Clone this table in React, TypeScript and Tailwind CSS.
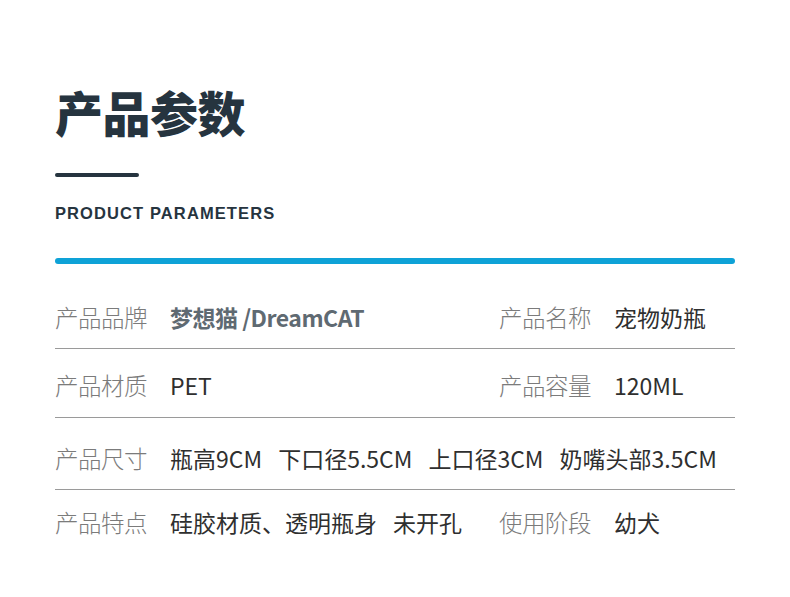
const CJK = { fontFamily: '"Noto Sans CJK SC", "Noto Sans", sans-serif' };

type Cell = { label: string; value: string[]; bold?: boolean };

function Field({ label, value, bold }: Cell) {
  return (
    <div className="flex items-center whitespace-nowrap">
      <span className="w-[115px] shrink-0 text-[23.5px] leading-[22px] font-light text-[#7b7b7b] tracking-[-0.5px]">{label}</span>
      <span
        className={
          bold
            ? "flex gap-4 text-[23px] leading-[22px] font-bold text-[#5f6a72] tracking-[-0.5px]"
            : "flex gap-4 text-[23px] leading-[22px] text-[#2f2f2f] tracking-[0px]"
        }
      >
        {value.map((v) => (
          <span key={v}>{v}</span>
        ))}
      </span>
    </div>
  );
}

export default function App() {
  return (
    <div className="w-[790px] h-[597px] bg-white overflow-hidden" style={CJK}>
      <div className="pl-[55px] pr-[55px] pt-[86px]">
        <h1 className="text-[48px] leading-[50px] font-black text-[#26343f] tracking-[-0.5px]">产品参数</h1>
        <div className="mt-[37px] h-[4px] w-[84px] rounded-full bg-[#26343f]" />
        <div
          className="mt-[27px] text-[16.5px] leading-[18px] font-bold text-[#26343f] tracking-[1.1px]"
          style={{ fontFamily: '"Liberation Sans", Arial, sans-serif' }}
        >
          PRODUCT PARAMETERS
        </div>
        <div className="mt-[36px] h-[6px] w-full rounded-full bg-[#0ea2d7]" />

        <div className="pt-[42px] pb-[20px] border-b border-[#9a9a9a] flex">
          <div className="w-[444px]">
            <Field label="产品品牌" value={["梦想猫 /DreamCAT"]} bold />
          </div>
          <Field label="产品名称" value={["宠物奶瓶"]} />
        </div>
        <div className="pt-[25px] pb-[21px] border-b border-[#9a9a9a] flex">
          <div className="w-[444px]">
            <Field label="产品材质" value={["PET"]} />
          </div>
          <Field label="产品容量" value={["120ML"]} />
        </div>
        <div className="pt-[29px] pb-[20px] border-b border-[#9a9a9a] flex">
          <Field label="产品尺寸" value={["瓶高9CM", "下口径5.5CM", "上口径3CM", "奶嘴头部3.5CM"]} />
        </div>
        <div className="pt-[21px] flex">
          <div className="w-[444px]">
            <Field label="产品特点" value={["硅胶材质、透明瓶身", "未开孔"]} />
          </div>
          <Field label="使用阶段" value={["幼犬"]} />
        </div>
      </div>
    </div>
  );
}
